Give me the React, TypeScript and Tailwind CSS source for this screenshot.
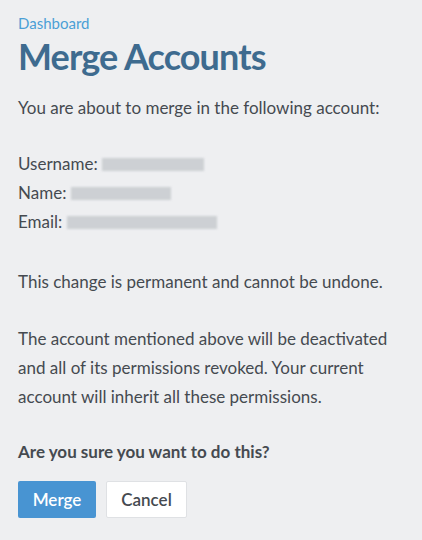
export default function App() {
  return (
    <div className="min-h-[540px] w-[422px] bg-[#eeeff1] px-[18px] pt-[13px] text-[#454a50]" style={{ fontFamily: "Lato, 'Noto Sans', sans-serif" }}>
      <div className="text-[15px] leading-[20px] text-[#4b9fd6]">Dashboard</div>
      <h1 className="mt-[1px] text-[36px] font-bold leading-[44px] tracking-[-0.9px] text-[#3e6b8f]">Merge Accounts</h1>
      <div className="mt-[15px] text-[17px] leading-[29px]">
        <p>You are about to merge in the following account:</p>
        <div className="mt-[27px]">
          <p>Username: <span className="inline-block h-[13px] w-[102px] bg-[#cdd0d4] align-[-1px] blur-[1px]" /></p>
          <p>Name: <span className="inline-block h-[13px] w-[100px] bg-[#cdd0d4] align-[-1px] blur-[1px]" /></p>
          <p>Email: <span className="inline-block h-[13px] w-[150px] bg-[#cdd0d4] align-[-1px] blur-[1px]" /></p>
        </div>
        <p className="mt-[31px]">This change is permanent and cannot be undone.</p>
        <p className="mt-[28px]">The account mentioned above will be deactivated and all of its permissions revoked. Your current account will inherit all these permissions.</p>
        <p className="mt-[26px] font-bold">Are you sure you want to do this?</p>
      </div>
      <div className="mt-[15px] flex gap-[10px]">
        <button className="h-[37px] w-[78px] rounded-[2px] bg-[#4894d2] text-[17px] font-semibold text-white">Merge</button>
        <button className="h-[37px] w-[81px] rounded-[2px] border border-[#dfe1e4] bg-white text-[17px] font-semibold text-[#454a50]">Cancel</button>
      </div>
    </div>
  );
}
